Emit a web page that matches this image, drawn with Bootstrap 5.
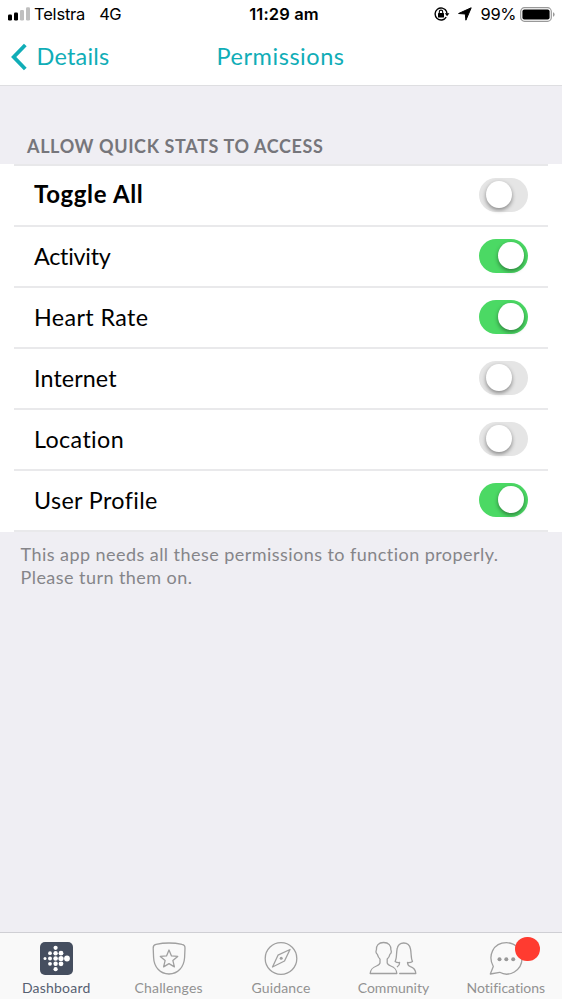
<!DOCTYPE html>
<html lang="en">
<head>
<meta charset="utf-8">
<meta name="viewport" content="width=device-width, initial-scale=1">
<title>Permissions</title>
<link href="https://cdn.jsdelivr.net/npm/bootstrap@5.3.0/dist/css/bootstrap.min.css" rel="stylesheet">
<style>
body{font-family:Lato,"Open Sans",sans-serif;font-variant-ligatures:none;background:#efeef3;color:#000;height:999px;overflow:hidden}
.status{height:28px;font:400 16.5px/28px Inter,Roboto,sans-serif;padding:0 7px 0 8px}
.status>div{flex:1 1 0}
.clock{font-weight:600;font-size:16.5px;letter-spacing:.15px;text-align:center;padding-left:5px}
.carrier{margin-left:4px;letter-spacing:-.2px}
.net{margin-left:14px;letter-spacing:-.6px}
.pct{letter-spacing:-.4px;margin:0 4px 0 9px}
.titlebar{height:58px;border-bottom:1px solid #dedee1;color:#10adb7;font-size:23.5px;line-height:57px;padding-left:11px}
.back,.back:hover{color:inherit;width:205.5px}
.back span{margin-left:9.5px;letter-spacing:.2px}
.page-name{letter-spacing:.55px}
.section-title{font-size:18px;line-height:24px;letter-spacing:.63px;font-weight:700;color:#76767b;padding:48px 27px 6px;height:78px;white-space:nowrap}
.perms{padding:0 14px}
.perms .list-group{border-top:2px solid #e8e8ea}
.perms .list-group-item,.perms .list-group-item:last-child{height:61px;border:0;border-bottom:2px solid #e9e9eb;padding:0 20px 1px;font-size:23.3px;letter-spacing:.38px;color:#000}
.perms .toggle-all{font-size:24px;letter-spacing:.65px}
.perms .tight{letter-spacing:-.25px}
.perms .snug{letter-spacing:.1px}
.toggle-all span{margin-top:-2px}
.toggle{appearance:none;width:49px;height:34px;border-radius:17px;background:#e5e5e5;margin:0;flex:none}
.toggle::before{content:"";display:block;width:26px;height:27.5px;border-radius:50%;background:#fff;margin:2.5px 0 0 7px;box-shadow:0 2px 4px rgba(0,0,0,.42)}
.toggle:checked{background:#4bd964}
.toggle:checked::before{margin-left:19px}
.hint{font-size:18px;line-height:23px;letter-spacing:.45px;color:#858589;padding:11px 20.5px;white-space:nowrap}
.tabs{height:67px;background:#f9f9f9;border-top:1px solid #cfcfd4}
.tabs a{flex:1 1 0;color:#929292;font-size:14px;letter-spacing:.15px;line-height:18px;padding-top:7px}
.tabs a.active{color:#566071;letter-spacing:.2px}
.tabs a.wide-name{letter-spacing:0}
.tabs a.active svg{margin-left:-1px}
.tabs svg{display:block;fill:none;stroke:#a0a0a0;stroke-width:1.3;stroke-linejoin:round;stroke-linecap:round}
.tabs span{margin-top:3px}
.dot{position:absolute;left:65.5px;top:3.5px;width:24.5px;height:24.5px;background:#ff3b30;border-radius:50%}
</style>
</head>
<body class="d-flex flex-column">
<header class="bg-white">
  <div class="status d-flex align-items-center">
    <div class="d-flex align-items-center">
      <svg width="22" height="14" viewBox="0 0 22 14"><rect y="7.5" width="4" height="6" rx="1.2"/><rect x="6" y="5.5" width="4" height="8" rx="1.2"/><rect x="12" y="3" width="4" height="10.5" rx="1.2" fill="#bfbfbf"/><rect x="18" y=".3" width="4" height="13.2" rx="1.2" fill="#bfbfbf"/></svg>
      <span class="carrier">Telstra</span><span class="net">4G</span>
    </div>
    <div class="clock">11:29 am</div>
    <div class="d-flex align-items-center justify-content-end">
      <svg width="16" height="14" viewBox="0 0 16 14"><path d="M12.4 4.2A6 6 0 1 0 12.2 10.2M11.2 2.4A6 6 0 0 1 13 6.7" fill="none" stroke="#000" stroke-width="1.4"/><path d="M10.8 6.3h4.6l-2.3 3z"/><rect x="4" y="6" width="6" height="4.6" rx=".5"/><path d="M5.3 6.2V4.8a1.7 1.7 0 0 1 3.4 0v1.4" fill="none" stroke="#000" stroke-width="1.1"/></svg>
      <svg class="ms-2" width="14" height="14" viewBox="0 0 14 14"><path d="M13.2.8 7.9 13.2 7.3 7 .6 6.5z" stroke="#000" stroke-width="1" stroke-linejoin="round"/></svg>
      <span class="pct">99%</span>
      <svg width="35" height="15" viewBox="0 0 35 15"><rect x=".7" y=".7" width="30.6" height="13.6" rx="3.8" fill="none" stroke="#999" stroke-width="1.2"/><rect x="2.4" y="2.4" width="27.2" height="10.2" rx="2"/><path d="M33 5.2q1.6.5 1.6 2.3T33 9.8z" fill="#999"/></svg>
    </div>
  </div>
  <nav class="titlebar d-flex">
    <a href="#" class="back d-flex align-items-center text-decoration-none"><svg width="16" height="28" viewBox="0 0 16 28"><path d="M14.3 2 2.7 14l11.6 12" fill="none" stroke="#10adb7" stroke-width="3.8"/></svg><span>Details</span></a>
    <div class="page-name">Permissions</div>
  </nav>
</header>
<main class="flex-grow-1">
  <div class="section-title">ALLOW QUICK STATS TO ACCESS</div>
  <section class="perms bg-white">
    <div class="list-group list-group-flush rounded-0">
      <label class="toggle-all list-group-item d-flex align-items-center justify-content-between fw-bold"><span>Toggle All</span><input class="toggle" type="checkbox"></label>
      <label class="tight list-group-item d-flex align-items-center justify-content-between">Activity<input class="toggle" type="checkbox" checked></label>
      <label class="list-group-item d-flex align-items-center justify-content-between">Heart Rate<input class="toggle" type="checkbox" checked></label>
      <label class="snug list-group-item d-flex align-items-center justify-content-between">Internet<input class="toggle" type="checkbox"></label>
      <label class="list-group-item d-flex align-items-center justify-content-between">Location<input class="toggle" type="checkbox"></label>
      <label class="list-group-item d-flex align-items-center justify-content-between">User Profile<input class="toggle" type="checkbox" checked></label>
    </div>
  </section>
  <div class="hint">This app needs all these permissions to function properly.<br>Please turn them on.</div>
</main>
<footer class="tabs d-flex">
  <a href="#" class="active d-flex flex-column align-items-center text-decoration-none">
    <svg width="34" height="36" viewBox="0 0 34 36"><rect x="1" y="2" width="33" height="33" rx="5" fill="#454e5f" stroke="none"/><g fill="#fff" stroke="none"><circle cx="6" cy="18.5" r="1.5"/><circle cx="11" cy="13.2" r="1.9"/><circle cx="11" cy="18.5" r="2"/><circle cx="11" cy="23.8" r="1.9"/><circle cx="16.6" cy="7.8" r="2.1"/><circle cx="16.6" cy="13.2" r="2.2"/><circle cx="16.6" cy="18.5" r="2.3"/><circle cx="16.6" cy="23.8" r="2.2"/><circle cx="16.6" cy="29.2" r="2.1"/><circle cx="22" cy="13.2" r="2.4"/><circle cx="22" cy="18.5" r="2.6"/><circle cx="22" cy="23.8" r="2.4"/><circle cx="28" cy="18.5" r="2.9"/></g></svg>
    <span>Dashboard</span></a>
  <a href="#" class="d-flex flex-column align-items-center text-decoration-none">
    <svg width="34" height="36" viewBox="0 0 34 36"><path d="M1.2 8.2Q1 5 4 4.4 17 1.6 30 4.4 33.200 5 33 8.200L32.600 17.500C32 27 26 34 17 34S2 27 1.600 17.500z"/><path d="m17 10 2.5 5.900 6.200.5-4.800 4.200 1.500 6.300L17 23.600l-5.400 3.300 1.500-6.300-4.800-4.200 6.200-.5z"/></svg>
    <span>Challenges</span></a>
  <a href="#" class="d-flex flex-column align-items-center text-decoration-none">
    <svg width="34" height="36" viewBox="0 0 34 36"><circle cx="17" cy="18.500" r="15.800"/><path d="M26 9.500 20.500 21 8.500 27 14 15.200z"/><circle cx="17.200" cy="18.300" r="1.500" fill="#a0a0a0" stroke="none"/></svg>
    <span>Guidance</span></a>
  <a href="#" class="wide-name d-flex flex-column align-items-center text-decoration-none">
    <svg width="48" height="36" viewBox="0 0 48 36"><path d="M14.600 2.500C9.500 2.500 7 5.800 7.400 10c-.9 1.300-.3 3.600 1 4.300.6 2.500 1.300 3.500 2.600 4.800v3.700c0 1.500-1 2.200-3.500 3.200-4 1.500-6 3-6.300 7.500h26.600c-.3-4.500-2-6-6-7.500-2.700-1-3.600-1.700-3.600-3.200v-3.700c1.400-1.300 2.200-2.300 2.700-4.800 1.300-.7 1.900-3 1-4.300.4-4.200-2.200-7.500-7.300-7.500z"/><path d="M30.700 33.500h16.100c-.2-4-1.800-5.500-5.300-6.800-2.200-.9-3-1.600-3-4.200 2.300.2 3.900-.2 5-1-1.800-3-1-8-2-12.500-.8-4-3.300-6-6.700-6s-6 2-6.700 6c-.9 4.500-.2 9.500-2 12.500 1.100.8 2.700 1.200 4.500 1 0 2.600-.4 3.300-2.200 4.200"/></svg>
    <span>Community</span></a>
  <a href="#" class="wide-name position-relative d-flex flex-column align-items-center text-decoration-none">
    <svg width="34" height="36" viewBox="0 0 34 36"><path d="M4.300 26.500C-1.500 16 4 2.700 17.500 2.700c8.500 0 15.500 7 15.500 15.600 0 12.500-13 19.200-22.300 14L1.300 34z"/><g fill="#999" stroke="none"><circle cx="10.500" cy="19.200" r="2"/><circle cx="17.300" cy="19.200" r="2"/><circle cx="24.200" cy="19.200" r="2"/></g></svg>
    <i class="dot"></i><span>Notifications</span></a>
</footer>
<script src="https://cdn.jsdelivr.net/npm/bootstrap@5.3.0/dist/js/bootstrap.bundle.min.js"></script>
</body>
</html>
